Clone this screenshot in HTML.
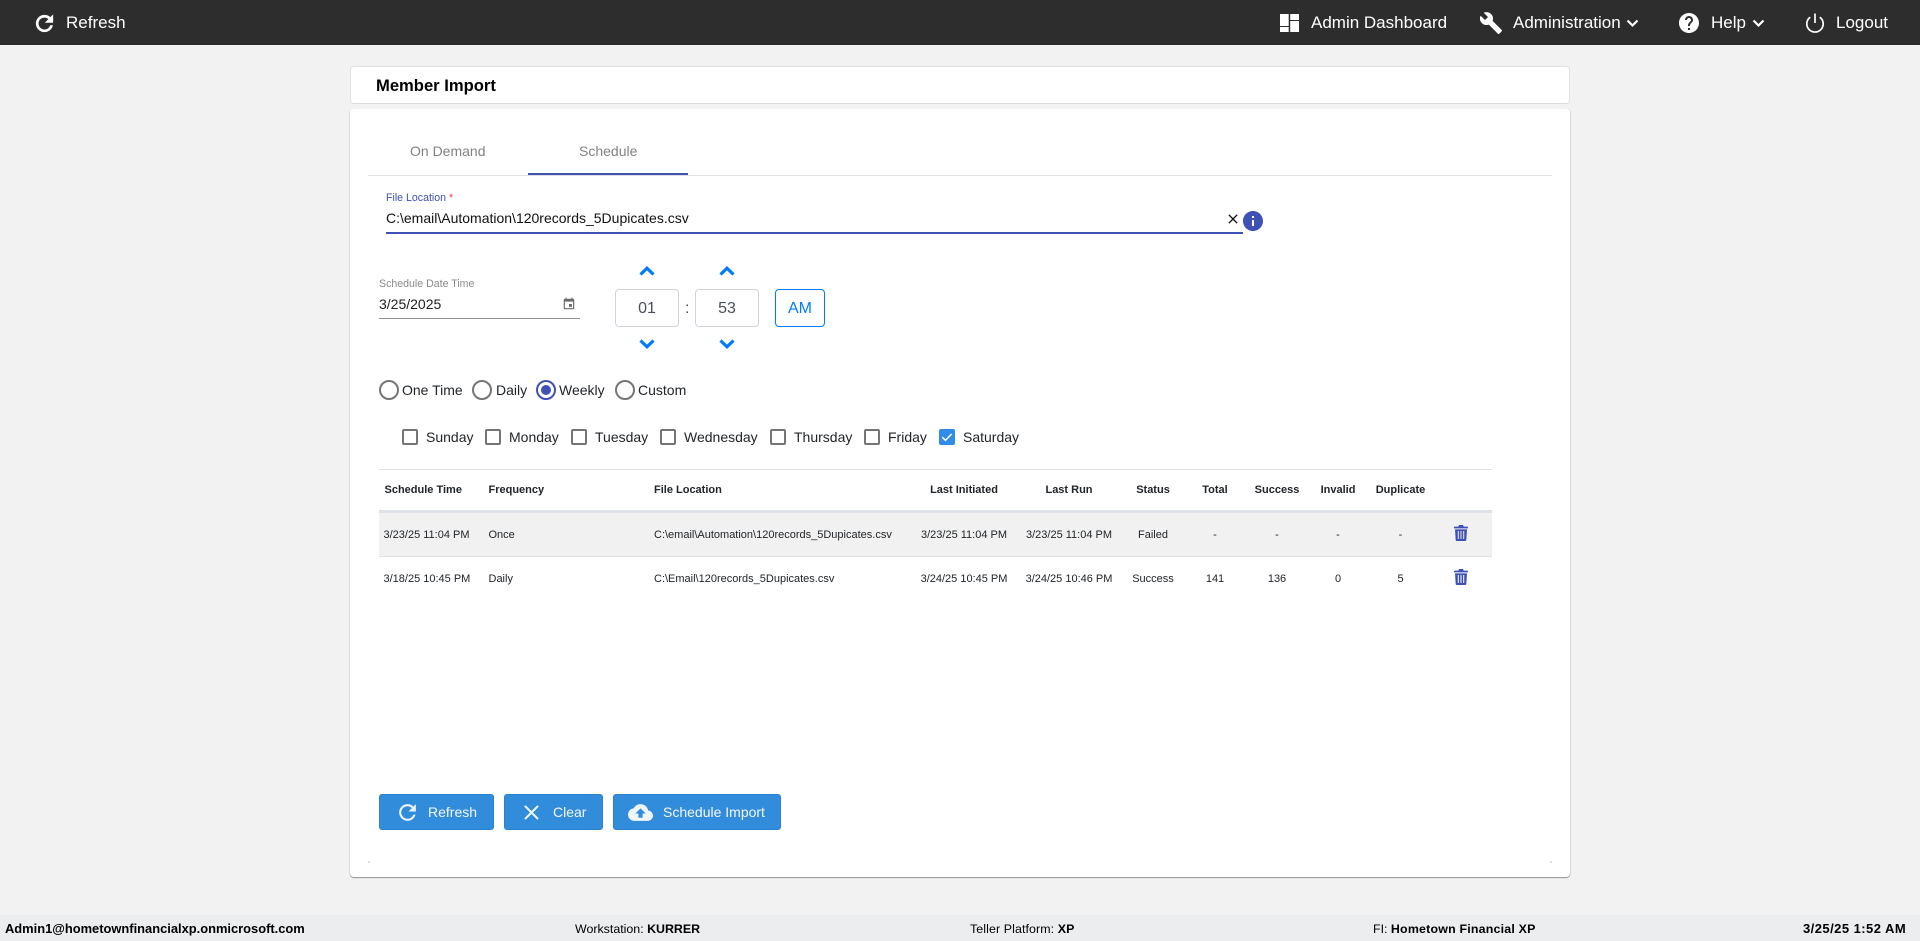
<!DOCTYPE html>
<html><head><meta charset="utf-8"><title>Member Import</title>
<style>
html,body{margin:0;padding:0;width:1920px;height:941px;overflow:hidden;background:#f2f2f2;font-family:"Liberation Sans",sans-serif;color:#212529}
.a{position:absolute;white-space:nowrap;line-height:20px;height:20px}
svg{position:absolute;display:block}
.nav{left:0;top:0;width:1920px;height:45px;background:#2d2d2d;position:absolute}
.n{color:#fff;font-size:17px;top:13px}
.tb{position:absolute;box-sizing:border-box;background:#fff;border:1px solid #ced4da;border-radius:4px;top:289px;height:38px;width:64px;text-align:center;line-height:37px;font-size:16px;color:#495057}
.r{font-size:14px;color:#212529;top:380px}
.rc{position:absolute;box-sizing:border-box;width:20px;height:20px;border:2px solid #757575;border-radius:50%;top:380px}
.c{font-size:14px;color:#212529;top:427px}
.cb{position:absolute;box-sizing:border-box;width:16px;height:16px;border:2px solid #757575;border-radius:2px;top:429px}
.h{font-size:11px;font-weight:bold;color:#212529;top:480px}
.d{font-size:11px;color:#212529}
.ct{transform:translateX(-50%)}
.btn{position:absolute;box-sizing:border-box;top:794px;height:36px;background:#318cdb;border:1px solid #2c82cf;border-radius:3px}
.bt{color:#f4f8fc;font-size:14px;top:802px}
.f{font-size:12.4px;color:#000;top:919px}
.f b{font-weight:bold}
</style></head><body>
<div class="nav"></div>
<svg style="left:32px;top:10.5px" width="25" height="25" viewBox="0 0 24 24" fill="#fff" stroke="#fff" stroke-width=".6"><path d="M17.65 6.35C16.2 4.9 14.21 4 12 4c-4.42 0-7.99 3.58-7.99 8s3.57 8 7.99 8c3.73 0 6.84-2.55 7.73-6h-2.08c-.82 2.33-3.04 4-5.65 4-3.31 0-6-2.69-6-6s2.69-6 6-6c1.66 0 3.14.69 4.22 1.78L13 11h7V4l-2.35 2.35z"/></svg>
<div class="a n" style="left:66px">Refresh</div>
<svg style="left:1280px;top:14px" width="19" height="18" viewBox="0 0 19 18" fill="#fff"><rect x="0" y="0" width="8.7" height="12"/><rect x="0" y="13" width="8.7" height="5"/><rect x="10.2" y="0" width="8.8" height="6"/><rect x="10.2" y="7" width="8.8" height="11"/></svg>
<div class="a n" style="left:1311px">Admin Dashboard</div>
<svg style="left:1479px;top:11px" width="24" height="24" viewBox="0 0 24 24" fill="#fff"><path d="M22.7 19l-9.1-9.1c.9-2.3.4-5-1.5-6.9-2-2-5-2.4-7.4-1.3L9 6 6 9 1.6 4.7C.4 7.1.9 10.1 2.9 12.1c1.9 1.9 4.6 2.4 6.9 1.5l9.1 9.1c.4.4 1 .4 1.4 0l2.3-2.3c.5-.4.5-1.1.1-1.4z"/></svg>
<div class="a n" style="left:1513px">Administration</div>
<svg style="left:1626px;top:18px" width="13" height="11" viewBox="0 0 13 11" fill="none" stroke="#fff" stroke-width="2.2"><path d="M1.5 2.5L6.5 7.5L11.5 2.5"/></svg>
<svg style="left:1677px;top:11px" width="24" height="24" viewBox="0 0 24 24" fill="#fff"><path d="M12 2C6.48 2 2 6.48 2 12s4.48 10 10 10 10-4.48 10-10S17.52 2 12 2zm1 17h-2v-2h2v2zm2.07-7.75l-.9.92C13.45 12.9 13 13.5 13 15h-2v-.5c0-1.1.45-2.1 1.17-2.83l1.24-1.26c.37-.36.59-.86.59-1.41 0-1.1-.9-2-2-2s-2 .9-2 2H8c0-2.21 1.79-4 4-4s4 1.79 4 4c0 .88-.36 1.68-.93 2.25z"/></svg>
<div class="a n" style="left:1711px">Help</div>
<svg style="left:1752px;top:18px" width="13" height="11" viewBox="0 0 13 11" fill="none" stroke="#fff" stroke-width="2.2"><path d="M1.5 2.5L6.5 7.5L11.5 2.5"/></svg>
<svg style="left:1802.5px;top:11px" width="24" height="24" viewBox="0 0 24 24" fill="none" stroke="#fff" stroke-width="1.7"><path d="M12 2.5V12"/><path d="M7.2 6.2a8.2 8.2 0 1 0 9.6 0"/></svg>
<div class="a n" style="left:1836px">Logout</div>

<div style="position:absolute;box-sizing:border-box;left:350px;top:66px;width:1220px;height:38px;background:#fff;border:1px solid #e2e2e2;border-bottom-color:#dcdcdc;border-radius:4px"></div>
<div class="a" style="left:376px;top:76px;font-size:16.6px;font-weight:bold;color:#000">Member Import</div>
<div style="position:absolute;left:350px;top:109px;width:1220px;height:768px;background:#fff;border-radius:4px;box-shadow:0 1px 1px rgba(0,0,0,.4),1px 0 1px rgba(0,0,0,.06),-1px 0 1px rgba(0,0,0,.03)"></div>

<div class="a" style="left:410px;top:141px;font-size:14px;color:#828282">On Demand</div>
<div class="a" style="left:579px;top:141px;font-size:14px;color:#828282">Schedule</div>
<div style="position:absolute;left:368px;top:175px;width:1184px;height:1px;background:#dfdfdf"></div>
<div style="position:absolute;left:528px;top:173px;width:160px;height:2px;background:#3f51b5"></div>

<div class="a" style="left:386px;top:188px;font-size:10.6px;color:#3f51b5">File Location <span style="color:#f44336">*</span></div>
<div class="a" style="left:386px;top:208px;font-size:14px;color:#111">C:\email\Automation\120records_5Dupicates.csv</div>
<div style="position:absolute;left:386px;top:232px;width:857px;height:2px;background:#3f51b5"></div>
<svg style="left:1225px;top:211px" width="16" height="16" viewBox="0 0 24 24" fill="#111"><path d="M19 6.41L17.59 5 12 10.59 6.41 5 5 6.41 10.59 12 5 17.59 6.41 19 12 13.41 17.59 19 19 17.59 13.41 12z"/></svg>
<svg style="left:1241px;top:209px" width="24" height="24" viewBox="0 0 24 24" fill="#3f51b5"><path d="M12 2C6.48 2 2 6.48 2 12s4.48 10 10 10 10-4.48 10-10S17.52 2 12 2zm1 15h-2v-6h2v6zm0-8h-2V7h2v2z"/></svg>

<div class="a" style="left:379px;top:274px;font-size:10.6px;color:#8a8a8a">Schedule Date Time</div>
<div class="a" style="left:379px;top:294px;font-size:14px;color:#212121">3/25/2025</div>
<div style="position:absolute;left:379px;top:318px;width:201px;height:1px;background:#8c8c8c"></div>
<svg style="left:562px;top:297px" width="14" height="14" viewBox="0 0 24 24" fill="#6b6b6b"><path d="M17 12h-5v5h5v-5zM16 1v2H8V1H6v2H5c-1.11 0-1.99.9-1.99 2L3 19c0 1.1.89 2 2 2h14c1.1 0 2-.9 2-2V5c0-1.1-.9-2-2-2h-1V1h-2zm3 18H5V8h14v11z"/></svg>

<svg style="left:639px;top:265px" width="16" height="12" viewBox="0 0 16 12" fill="none" stroke="#007bff" stroke-width="3.2"><path d="M1.5 9.5L8 3.2L14.5 9.5"/></svg>
<svg style="left:719px;top:265px" width="16" height="12" viewBox="0 0 16 12" fill="none" stroke="#007bff" stroke-width="3.2"><path d="M1.5 9.5L8 3.2L14.5 9.5"/></svg>
<svg style="left:639px;top:338px" width="16" height="12" viewBox="0 0 16 12" fill="none" stroke="#007bff" stroke-width="3.2"><path d="M1.5 2.5L8 8.8L14.5 2.5"/></svg>
<svg style="left:719px;top:338px" width="16" height="12" viewBox="0 0 16 12" fill="none" stroke="#007bff" stroke-width="3.2"><path d="M1.5 2.5L8 8.8L14.5 2.5"/></svg>
<div class="tb" style="left:615px">01</div>
<div class="a" style="left:685px;top:298.5px;font-size:16px;color:#495057">:</div>
<div class="tb" style="left:695px">53</div>
<div class="tb" style="left:775px;width:50px;border-color:#007bff;color:#007bff">AM</div>

<div class="rc" style="left:379px"></div><div class="a r" style="left:402px">One Time</div>
<div class="rc" style="left:472px"></div><div class="a r" style="left:496px">Daily</div>
<div class="rc" style="left:536px;border-color:#3f51b5"></div><div style="position:absolute;left:541px;top:385px;width:10px;height:10px;border-radius:50%;background:#3f51b5"></div><div class="a r" style="left:559px">Weekly</div>
<div class="rc" style="left:615px"></div><div class="a r" style="left:638px">Custom</div>

<div class="cb" style="left:402px"></div><div class="a c" style="left:426px">Sunday</div>
<div class="cb" style="left:485px"></div><div class="a c" style="left:509px">Monday</div>
<div class="cb" style="left:571px"></div><div class="a c" style="left:595px">Tuesday</div>
<div class="cb" style="left:660px"></div><div class="a c" style="left:684px">Wednesday</div>
<div class="cb" style="left:770px"></div><div class="a c" style="left:794px">Thursday</div>
<div class="cb" style="left:864px"></div><div class="a c" style="left:888px">Friday</div>
<div class="cb" style="left:939px;background:#318ce7;border-color:#318ce7"></div>
<svg style="left:939px;top:429px" width="16" height="16" viewBox="0 0 16 16" fill="none" stroke="#fff" stroke-width="1.5"><path d="M3.2 8.2L6.5 11.3L12.6 5"/></svg>
<div class="a c" style="left:963px">Saturday</div>

<div style="position:absolute;left:379px;top:469px;width:1113px;height:1px;background:#dee2e6"></div>
<div style="position:absolute;left:379px;top:510px;width:1113px;height:3px;background:#dee2e6"></div>
<div style="position:absolute;left:379px;top:513px;width:1113px;height:43px;background:#f1f1f1"></div>
<div style="position:absolute;left:379px;top:556px;width:1113px;height:1px;background:#dee2e6"></div>

<div class="a h" style="left:384.5px">Schedule Time</div>
<div class="a h" style="left:488.5px">Frequency</div>
<div class="a h" style="left:654px">File Location</div>
<div class="a h ct" style="left:964px">Last Initiated</div>
<div class="a h ct" style="left:1069px">Last Run</div>
<div class="a h ct" style="left:1153px">Status</div>
<div class="a h ct" style="left:1215px">Total</div>
<div class="a h ct" style="left:1277px">Success</div>
<div class="a h ct" style="left:1338px">Invalid</div>
<div class="a h ct" style="left:1400.5px">Duplicate</div>

<div class="a d" style="left:383.5px;top:525px">3/23/25 11:04 PM</div>
<div class="a d" style="left:488.5px;top:525px">Once</div>
<div class="a d" style="left:654px;top:525px">C:\email\Automation\120records_5Dupicates.csv</div>
<div class="a d ct" style="left:964px;top:525px">3/23/25 11:04 PM</div>
<div class="a d ct" style="left:1069px;top:525px">3/23/25 11:04 PM</div>
<div class="a d ct" style="left:1153px;top:525px">Failed</div>
<div class="a d ct" style="left:1215px;top:525px">-</div>
<div class="a d ct" style="left:1277px;top:525px">-</div>
<div class="a d ct" style="left:1338px;top:525px">-</div>
<div class="a d ct" style="left:1400.5px;top:525px">-</div>
<svg style="left:1454px;top:524.5px" width="14" height="16" viewBox="0 0 14 16" fill="#3f51b5"><path d="M5 0h4l.7 1.6h3.6a.6.6 0 0 1 .6.6V3.4H0V2.2a.6.6 0 0 1 .6-.6h3.7z"/><path fill-rule="evenodd" d="M1 4.4h12l-.7 10.6a1 1 0 0 1-1 1H2.7a1 1 0 0 1-1-1zM3.8 6v8h1V6zM6.5 6v8h1V6zM9.2 6v8h1V6z"/></svg>

<div class="a d" style="left:383.5px;top:569px">3/18/25 10:45 PM</div>
<div class="a d" style="left:488.5px;top:569px">Daily</div>
<div class="a d" style="left:654px;top:569px">C:\Email\120records_5Dupicates.csv</div>
<div class="a d ct" style="left:964px;top:569px">3/24/25 10:45 PM</div>
<div class="a d ct" style="left:1069px;top:569px">3/24/25 10:46 PM</div>
<div class="a d ct" style="left:1153px;top:569px">Success</div>
<div class="a d ct" style="left:1215px;top:569px">141</div>
<div class="a d ct" style="left:1277px;top:569px">136</div>
<div class="a d ct" style="left:1338px;top:569px">0</div>
<div class="a d ct" style="left:1400.5px;top:569px">5</div>
<svg style="left:1454px;top:568.5px" width="14" height="16" viewBox="0 0 14 16" fill="#3f51b5"><path d="M5 0h4l.7 1.6h3.6a.6.6 0 0 1 .6.6V3.4H0V2.2a.6.6 0 0 1 .6-.6h3.7z"/><path fill-rule="evenodd" d="M1 4.4h12l-.7 10.6a1 1 0 0 1-1 1H2.7a1 1 0 0 1-1-1zM3.8 6v8h1V6zM6.5 6v8h1V6zM9.2 6v8h1V6z"/></svg>

<div class="btn" style="left:379px;width:115px"></div>
<svg style="left:395px;top:800px" width="25" height="25" viewBox="0 0 24 24" fill="#f0f5fb"><path d="M17.65 6.35C16.2 4.9 14.21 4 12 4c-4.42 0-7.99 3.58-7.99 8s3.57 8 7.99 8c3.73 0 6.84-2.55 7.73-6h-2.08c-.82 2.33-3.04 4-5.65 4-3.31 0-6-2.69-6-6s2.69-6 6-6c1.66 0 3.14.69 4.22 1.78L13 11h7V4l-2.35 2.35z"/></svg>
<div class="a bt" style="left:428px">Refresh</div>
<div class="btn" style="left:504px;width:99px"></div>
<svg style="left:519px;top:800px" width="25" height="25" viewBox="0 0 24 24" fill="#f0f5fb"><path d="M19 6.41L17.59 5 12 10.59 6.41 5 5 6.41 10.59 12 5 17.59 6.41 19 12 13.41 17.59 19 19 17.59 13.41 12z"/></svg>
<div class="a bt" style="left:553px">Clear</div>
<div class="btn" style="left:613px;width:168px"></div>
<svg style="left:628px;top:799.5px" width="25" height="25" viewBox="0 0 24 24" fill="#f0f5fb"><path d="M19.35 10.04C18.67 6.59 15.64 4 12 4 9.11 4 6.6 5.64 5.35 8.04 2.34 8.36 0 10.91 0 14c0 3.31 2.69 6 6 6h13c2.76 0 5-2.24 5-5 0-2.64-2.05-4.78-4.65-4.96zM14 13v4h-4v-4H7l5-5 5 5h-3z"/></svg>
<div class="a bt" style="left:663px">Schedule Import</div>

<div style="position:absolute;left:368px;top:861px;width:2px;height:2px;background:#ddd"></div>
<div style="position:absolute;left:1550px;top:861px;width:2px;height:2px;background:#ddd"></div>

<div style="position:absolute;left:0;top:915px;width:1920px;height:26px;background:#ecedef"></div>
<div class="a f" style="left:5px;font-size:12.9px"><b>Admin1@hometownfinancialxp.onmicrosoft.com</b></div>
<div class="a f" style="left:575px">Workstation: <b>KURRER</b></div>
<div class="a f" style="left:970px;letter-spacing:.1px">Teller Platform: <b>XP</b></div>
<div class="a f" style="left:1373px">FI: <b style="letter-spacing:.2px">Hometown Financial XP</b></div>
<div class="a f" style="left:1803px;font-size:13px"><b style="letter-spacing:.45px">3/25/25 1:52 AM</b></div>
</body></html>
